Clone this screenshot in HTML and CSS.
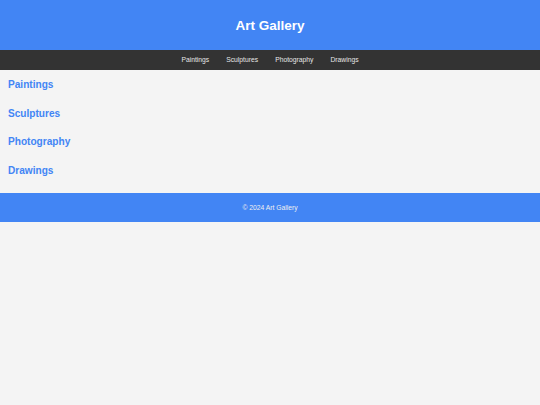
FILE: index.html
```html
<!DOCTYPE html>
<html lang="en">
<head>
<meta charset="utf-8">
<title>Art Gallery</title>
<link rel="stylesheet" href="styles.css">
</head>
<body>
<header class="site-header">
  <h1 class="site-title">Art Gallery</h1>
</header>
<nav class="site-nav">
  <a href="#paintings" class="nav-link">Paintings</a>
  <a href="#sculptures" class="nav-link">Sculptures</a>
  <a href="#photography" class="nav-link">Photography</a>
  <a href="#drawings" class="nav-link">Drawings</a>
</nav>
<main class="content">
  <section id="paintings" class="gallery-section"><h2 class="section-title">Paintings</h2></section>
  <section id="sculptures" class="gallery-section"><h2 class="section-title">Sculptures</h2></section>
  <section id="photography" class="gallery-section"><h2 class="section-title">Photography</h2></section>
  <section id="drawings" class="gallery-section"><h2 class="section-title">Drawings</h2></section>
</main>
<footer class="site-footer">
  <p class="footer-text">&copy; 2024 Art Gallery</p>
</footer>
</body>
</html>
```

FILE: styles.css
```css
html, body {
  margin: 0;
  padding: 0;
}
body {
  background: #f4f4f4;
  font-family: "Liberation Sans", Arial, sans-serif;
}
.site-header {
  background: #4285f4;
  height: 50px;
  display: flex;
  align-items: center;
  justify-content: center;
}
.site-title {
  margin: 0;
  padding-top: 1.5px;
  color: #ffffff;
  font-size: 13.5px;
  font-weight: bold;
  line-height: 1;
}
.site-nav {
  background: #333333;
  height: 20px;
  display: flex;
  align-items: center;
  justify-content: center;
  gap: 17px;
}
.nav-link {
  padding-top: 1px;
  color: #e6e6e6;
  text-decoration: none;
  font-size: 6.75px;
  line-height: 1;
}
.content {
  padding: 0 8px 8.3px;
}
.gallery-section {
  height: 28.67px;
  display: flex;
  align-items: center;
}
.section-title {
  margin: 0;
  padding-top: 1.5px;
  color: #4285f4;
  font-size: 10.1px;
  font-weight: bold;
  line-height: 1;
}
.site-footer {
  background: #4285f4;
  height: 29px;
  display: flex;
  align-items: center;
  justify-content: center;
}
.footer-text {
  margin: 0;
  padding-top: 1.5px;
  color: #f0f0f0;
  font-size: 6.75px;
  line-height: 1;
}
```
